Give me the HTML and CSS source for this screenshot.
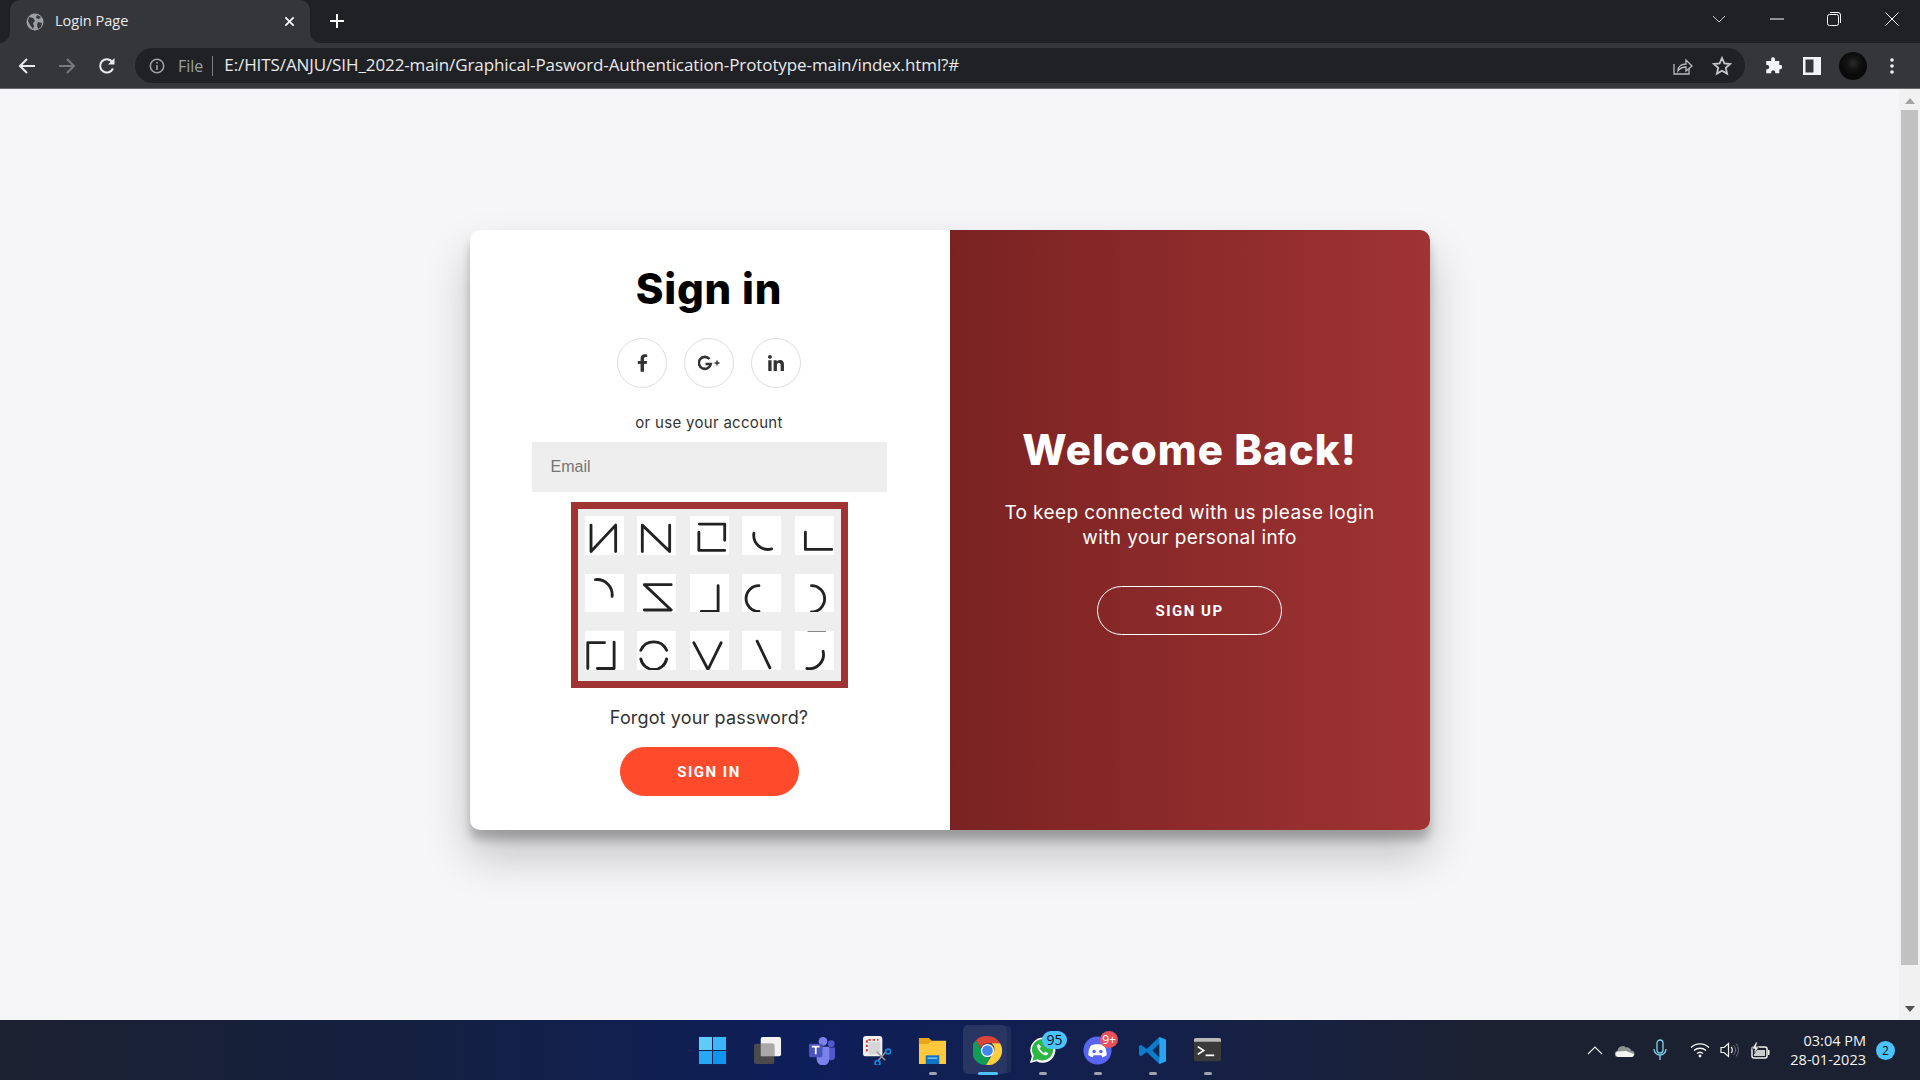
FILE: index.html

```html
<!DOCTYPE html>
<html lang="en">
<head>
  <meta charset="UTF-8" />
  <meta name="viewport" content="width=device-width, initial-scale=1.0" />
  <title>Login Page</title>
  <link rel="stylesheet" href="styles.css">
</head>
<body>
  <header class="browser">
    <div class="tabstrip">
      <div class="tab">
        <svg class="favicon" viewBox="0 0 18 18"><circle cx="9" cy="9" r="8.500" fill="#9aa0a6"/><path d="M3 4l4 1 2 3-2 2 1 3-1 3-3-4-2-4zM11 2l4 2-2 2-3-1zM12 9l4 1-1 4-3 2-1-4z" fill="#35363a"/></svg>
        <span class="tab-title">Login Page</span>
        <svg class="tab-close" viewBox="0 0 12 12"><path d="M1.500 1.500l9 9M10.500 1.500l-9 9" stroke="#fff" stroke-width="1.800"/></svg>
      </div>
      <svg class="new-tab" viewBox="0 0 14 14"><path d="M7 0v14M0 7h14" stroke="#fff" stroke-width="2"/></svg>
      <div class="window-btns">
        <svg width="14" height="8" viewBox="0 0 14 8"><path d="M1 1l6 6 6-6" fill="none" stroke="#c8c8c8"/></svg>
        <svg class="wb-min" width="14" height="2" viewBox="0 0 14 2"><path d="M0 1h14" stroke="#fff"/></svg>
        <svg class="wb-max" width="14" height="14" viewBox="0 0 14 14"><rect x=".5" y="2.500" width="11" height="11" rx="2" fill="none" stroke="#fff"/><path d="M3 .5h8a2.500 2.500 0 0 1 2.500 2.500v8" fill="none" stroke="#fff"/></svg>
        <svg class="wb-close" width="14" height="14" viewBox="0 0 14 14"><path d="M.5.5l13 13M13.500.5l-13 13" stroke="#fff"/></svg>
      </div>
    </div>
    <div class="toolbar">
      <svg class="tool" viewBox="0 0 18 18"><path d="M17 9H2.500M9 2L2 9l7 7" fill="none" stroke="#e8eaed" stroke-width="2"/></svg>
      <svg class="tool" viewBox="0 0 18 18"><path d="M1 9h14.500M9 2l7 7-7 7" fill="none" stroke="#77797c" stroke-width="2"/></svg>
      <svg class="tool" viewBox="0 0 18 18"><path d="M15 11.500A6.700 6.700 0 1 1 14.200 4.800" fill="none" stroke="#e8eaed" stroke-width="2"/><path d="M16.500 1v6.500H10z" fill="#e8eaed"/></svg>
      <div class="omnibox">
        <svg class="info" viewBox="0 0 16 16"><circle cx="8" cy="8" r="6.700" fill="none" stroke="#9aa0a6" stroke-width="1.600"/><path d="M7.200 7h1.600v5H7.200zM7.200 4h1.600v1.600H7.200z" fill="#9aa0a6"/></svg>
        <span class="scheme">File</span>
        <span class="url">E:/HITS/ANJU/SIH_2022-main/Graphical-Pasword-Authentication-Prototype-main/index.html?#</span>
        <svg class="omni-icon" viewBox="0 0 20 20"><path d="M1 8v10h15v-5" fill="none" stroke="#b8babc" stroke-width="1.300"/><path d="M5 15c0-5 4-7 8-7V4l6 6-6 5v-4c-3 0-6 1-8 4z" fill="none" stroke="#b8babc" stroke-width="1.300"/></svg>
        <svg class="omni-icon" viewBox="0 0 20 20"><path d="M10 2l2.400 5.400 5.800.6-4.400 3.900 1.300 5.700L10 14.700l-5.100 2.900 1.300-5.700L1.800 8l5.800-.6z" fill="none" stroke="#c4c6c8" stroke-width="1.800"/></svg>
      </div>
      <svg class="ext" viewBox="0 0 20 20"><path d="M8 1.500a2.300 2.300 0 0 1 4.300 1V4.500H17v4.300h1.500a2.400 2.400 0 0 1 0 4.700H17V18h-4.500v-1.500a2.300 2.300 0 0 0-4.500 0V18H2.500v-4.500H4a2.300 2.300 0 0 0 0-4.500H2.500V4.500H8z" fill="#f1f3f4"/></svg>
      <svg class="ext ext-panel" viewBox="0 0 18 18"><path d="M0 0h18v18H0z" fill="#f1f3f4"/><path d="M2.500 2.500h8v13h-8z" fill="#35363a"/></svg>
      <span class="avatar"></span>
      <svg class="kebab" viewBox="0 0 4 16"><circle cx="2" cy="2" r="1.800" fill="#f1f3f4"/><circle cx="2" cy="8" r="1.800" fill="#f1f3f4"/><circle cx="2" cy="14" r="1.800" fill="#f1f3f4"/></svg>
    </div>
  </header>

  <div class="viewport">
    <main class="page">
      <div class="card">
        <form class="signin" onsubmit="return false">
          <h1 class="signin-title">Sign in</h1>
          <div class="socials">
            <a class="social" href="#"><svg class="ico-f" viewBox="0 0 320 512"><path d="M279 288l14-93h-89v-60c0-25 12-50 52-50h41V6s-37-6-72-6c-73 0-121 44-121 125v70H23v93h81v224h100V288z"/></svg></a>
            <a class="social" href="#"><svg class="ico-g" viewBox="0 0 22 16"><path class="g-main" d="M11.500 4A6 6 0 1 0 12.800 9H7.500"/><path class="g-plus" d="M16.500 8h5M19 5.500v5"/></svg></a>
            <a class="social" href="#"><svg class="ico-in" viewBox="0 0 448 448"><path d="M100 448H7V149h93zM54 108C24 108 0 83 0 54a54 54 0 0 1 108 0c0 29-24 54-54 54zM447 448h-93V302c0-35-1-79-48-79-48 0-56 38-56 77v148h-93V149h89v41h1c12-24 43-48 88-48 94 0 112 62 112 142z"/></svg></a>
          </div>
          <span class="hint">or use your account</span>
          <input class="email" type="email" placeholder="Email" />
          <div class="pattern">
            <div class="tile"><svg viewBox="0 0 38 38"><path d="M5.700 9V35L30 9V35"/></svg></div>
            <div class="tile"><svg viewBox="0 0 38 38"><path d="M5 35V9L32 35V9"/></svg></div>
            <div class="tile"><svg viewBox="0 0 38 38"><path d="M9 8H34V24M8.500 16V34H34"/></svg></div>
            <div class="tile"><svg viewBox="0 0 38 38"><path d="M11.500 17A14 14 0 0 0 29 32.500"/></svg></div>
            <div class="tile"><svg viewBox="0 0 38 38"><path d="M10 16V33H36"/></svg></div>
            <div class="tile"><svg viewBox="0 0 38 38"><path d="M10 5.500A15 15 0 0 1 26.500 22"/></svg></div>
            <div class="tile"><svg viewBox="0 0 38 38"><path d="M33.500 10.500H7L33.500 35.500H7"/></svg></div>
            <div class="tile"><svg viewBox="0 0 38 38"><path d="M27.500 11.500V37H11"/></svg></div>
            <div class="tile"><svg viewBox="0 0 38 38"><path d="M16.500 11.500A12.750 12.750 0 0 0 16.500 37"/></svg></div>
            <div class="tile"><svg viewBox="0 0 38 38"><path d="M16 11.500A13 13 0 0 1 16 37.500"/></svg></div>
            <div class="tile"><svg viewBox="0 0 38 38"><path d="M2.500 37V11.500H19M28.500 11V37H12"/></svg></div>
            <div class="tile"><svg viewBox="0 0 38 38"><path d="M3.500 19A14 14 0 0 1 29 19M3.500 27.500A13 13 0 0 0 29 27.500"/></svg></div>
            <div class="tile"><svg viewBox="0 0 38 38"><path d="M3.500 11.500L17.500 38L30.500 11.500"/></svg></div>
            <div class="tile"><svg viewBox="0 0 38 38"><path d="M14.700 10L27.300 36.300"/></svg></div>
            <div class="tile"><svg viewBox="0 0 38 38"><path d="M27.500 20A14 14 0 0 1 11.500 37"/><path class="thin" d="M12.500 .5H30"/></svg></div>
          </div>
          <a class="forgot" href="#">Forgot your password?</a>
          <button class="btn btn-fill">SIGN IN</button>
        </form>
        <section class="welcome">
          <h1 class="welcome-title">Welcome Back!</h1>
          <p class="welcome-text">To keep connected with us please login with your personal info</p>
          <button class="btn btn-ghost">SIGN UP</button>
        </section>
      </div>
    </main>
    <div class="scrollbar">
      <svg class="arrow arrow-up" viewBox="0 0 10 6"><path d="M0 6l5-6 5 6z" fill="#a3a3a3"/></svg>
      <div class="thumb"></div>
      <svg class="arrow arrow-down" viewBox="0 0 10 6"><path d="M0 0l5 6 5-6z" fill="#505050"/></svg>
    </div>
  </div>

  <footer class="taskbar">
    <div class="apps">
      <div class="app"><svg viewBox="0 0 30 30"><path d="M1 1h13.500v13.500H1z" fill="#5fcdf8"/><path d="M15.500 1H29v13.500H15.500z" fill="#3cb6f5"/><path d="M1 15.500h13.500V29H1z" fill="#26a8f2"/><path d="M15.500 15.500H29V29H15.500z" fill="#0f95ee"/></svg></div>
      <div class="app"><svg viewBox="0 0 30 30"><rect x="8" y="1" width="21" height="20" rx="2" fill="#f2f2f2"/><rect x="1" y="8" width="21" height="21" rx="2" fill="#4a4a4a"/><rect x="8" y="8" width="14" height="13" fill="#a9a9a9"/></svg></div>
      <div class="app"><svg viewBox="0 0 30 30"><circle cx="24" cy="8" r="3.500" fill="#5059c9"/><path d="M20 12h8v9a4 4 0 0 1-8 0z" fill="#5059c9"/><circle cx="15.500" cy="5.500" r="4.500" fill="#7b83eb"/><path d="M9 11h13v13a6 6 0 0 1-13 0z" fill="#7b83eb"/><rect x="1" y="8" width="14" height="14" rx="1.500" fill="#4b53bc"/><path d="M4 11h8M8 11v8" stroke="#fff" stroke-width="1.800"/></svg></div>
      <div class="app"><svg viewBox="0 0 30 30"><rect x="0" y="0" width="20" height="21" rx="3" fill="#f0f0f0"/><path d="M4 16V4h12" fill="none" stroke="#e0392b" stroke-width="2" stroke-dasharray="2.500 2"/><path d="M6 6h12v13H6z" fill="#d6d6d6"/><path d="M14 16l9 9M24 16l-8 9" stroke="#9b9b9b" stroke-width="1.500"/><circle cx="26" cy="16" r="2.500" fill="none" stroke="#1883d7" stroke-width="1.800"/><circle cx="15" cy="28" r="2.500" fill="none" stroke="#1883d7" stroke-width="1.800"/></svg></div>
      <div class="app dot"><svg viewBox="0 0 30 30"><path d="M1 2h10l3 3h15v24H1z" fill="#ffc83d"/><path d="M1 2h10l3 3H1z" fill="#e8a317"/><path d="M1 5h13l-3 3H1z" fill="#e8a317"/><path d="M8 20h14v9H8z" fill="#1173c5"/><path d="M10 23h10" stroke="#7cc6f4" stroke-width="1.500"/></svg></div>
      <div class="app active"><svg viewBox="0 0 30 30"><path d="M15 0a15 15 0 0 1 13 7.500H15a7.500 7.500 0 0 0-7 5L3 4.500A15 15 0 0 1 15 0z" fill="#db4437"/><path d="M3 4.500l6.500 11.200A7.500 7.500 0 0 0 17.500 22l-4 8A15 15 0 0 1 3 4.500z" fill="#0f9d58"/><path d="M28 7.500A15 15 0 0 1 13.500 30l6.500-11a7.500 7.500 0 0 0-1-11.500z" fill="#ffcd40"/><circle cx="15" cy="15" r="6.800" fill="#fff"/><circle cx="15" cy="15" r="5.500" fill="#4285f4"/></svg></div>
      <div class="app dot"><svg viewBox="0 0 30 30"><path d="M2 28l2-7A13 13 0 1 1 9 26z" fill="#fff"/><path d="M4.500 25.500L6 20.500A11 11 0 1 1 10 24z" fill="#2bb741"/><path d="M11 8c-3 2-1 6 2 9s7 4 8 1l-3-2-1.500 1.500c-2-1-3.500-2.500-4.500-4.500L13.500 11z" fill="#fff"/></svg><span class="badge badge-blue">95</span></div>
      <div class="app dot"><svg viewBox="0 0 30 30"><circle cx="15" cy="15" r="14.500" fill="#5865f2"/><path d="M8 10c4-2 10-2 14 0 2 3 2.500 7 2.500 10-1.500 1-3 1.500-4.500 2l-1-2h-8l-1 2c-1.500-.5-3-1-4.500-2 0-3 .5-7 2.500-10z" fill="#fff"/><circle cx="11.500" cy="16" r="1.800" fill="#5865f2"/><circle cx="18.500" cy="16" r="1.800" fill="#5865f2"/></svg><span class="badge badge-red">9+</span></div>
      <div class="app dot"><svg viewBox="0 0 30 30"><path d="M22 1l7 3v22l-7 3L9 16.500 3 21l-2-1.500V10.500L3 9l6 4.500z" fill="#0a7cc9"/><path d="M22 1l7 3v22l-7 3z" fill="#2aa4ee"/><path d="M22 8l-7 7 7 7z" fill="#122a55"/></svg></div>
      <div class="app dot"><svg viewBox="0 0 30 30"><rect x="1" y="2" width="28" height="24" rx="2" fill="#3a3a3a"/><path d="M1 4a2 2 0 0 1 2-2h24a2 2 0 0 1 2 2v2H1z" fill="#b9b9b9"/><path d="M5 11l6 4-6 4" fill="none" stroke="#fff" stroke-width="1.800"/><path d="M13 20h9" stroke="#fff" stroke-width="1.800"/></svg></div>
    </div>
    <div class="tray">
      <svg class="tray-icon" viewBox="0 0 16 10"><path d="M1 9l7-7 7 7" fill="none" stroke="#e8e8e8" stroke-width="1.200"/></svg>
      <svg class="tray-cloud" viewBox="0 0 20 13"><path d="M3 13a3 3 0 0 1-.5-6A5 5 0 0 1 11 3.500a4 4 0 0 1 5 3 3.300 3.300 0 0 1 1 6.500z" fill="#8c8f94"/><path d="M3 13a3 3 0 0 1-1-5.500l9-.5 8 3a3 3 0 0 1-2 3z" fill="#f3f3f3"/></svg>
      <svg class="tray-mic" viewBox="0 0 16 22"><rect x="5" y="1" width="6" height="13" rx="3" fill="none" stroke="#7fd0ea" stroke-width="1.300"/><path d="M2 10a6 6 0 0 0 12 0M8 16v5" fill="none" stroke="#7fd0ea" stroke-width="1.300"/></svg>
      <svg class="tray-wifi" viewBox="0 0 20 16"><path d="M1 5.500a13 13 0 0 1 18 0M4 8.500a9 9 0 0 1 12 0M7 11.500a4.500 4.500 0 0 1 6 0" fill="none" stroke="#f3f3f3" stroke-width="1.400"/><circle cx="10" cy="14" r="1.400" fill="#f3f3f3"/></svg>
      <svg class="tray-sound" viewBox="0 0 20 16"><path d="M1 5.500h3L8.500 1.500v13L4 10.500H1z" fill="none" stroke="#f3f3f3" stroke-width="1.200"/><path d="M11 5a4 4 0 0 1 0 6" fill="none" stroke="#f3f3f3" stroke-width="1.200"/><path d="M13.500 3a7 7 0 0 1 0 10M16 1.500a10 10 0 0 1 0 13" fill="none" stroke="#6c6f74" stroke-width="1"/></svg>
      <svg class="tray-batt" viewBox="0 0 20 17"><rect x="2" y="5" width="15" height="11" rx="2" fill="#1b1f2a" stroke="#f3f3f3" stroke-width="1.500"/><path d="M4 8h11v6H4z" fill="#c9cacc"/><path d="M18 8v5h1.500V8z" fill="#f3f3f3"/><path d="M6 0L2 7h3l-1 5 5-7H6l1.500-5z" fill="#f3f3f3" stroke="#1b1f2a" stroke-width=".6"/></svg>
      <div class="clock"><span>03:04 PM</span><span>28-01-2023</span></div>
      <span class="notif">2</span>
    </div>
  </footer>
</body>
</html>
```

FILE: styles.css

```css
html, body { margin: 0; padding: 0; height: 100%; overflow: hidden; }
body { width: 1920px; height: 1080px; display: flex; flex-direction: column; background: #f6f5f7; font-family: "Open Sans", sans-serif; }

/* browser window */
.browser { flex: none; background: #35363a; height: 89px; box-shadow: inset 0 -1px 0 #6a6b6e; }
.tabstrip { height: 43px; background: #202124; display: flex; align-items: flex-start; }
.tab { width: 300px; height: 43px; margin-left: 10px; background: #35363a; border-radius: 10px 10px 0 0; display: flex; align-items: center; padding: 0 15px 0 16px; box-sizing: border-box; position: relative; }
.tab::before, .tab::after { content: ""; position: absolute; bottom: 0; width: 10px; height: 10px; }
.tab::before { left: -10px; background: radial-gradient(circle at 0 0, #202124 9.5px, #35363a 10px); }
.tab::after { right: -10px; background: radial-gradient(circle at 100% 0, #202124 9.5px, #35363a 10px); }
.favicon { width: 18px; height: 18px; margin-right: 11px; }
.tab-title { flex: 1; color: #e8eaed; font-size: 14.5px; padding-bottom: 2px; }
.tab-close { width: 11px; height: 11px; }
.new-tab { width: 14px; height: 14px; margin: 14px 0 0 20px; }
.window-btns { margin-left: auto; display: flex; align-items: center; height: 38px; padding-right: 21px; }
.wb-min { margin-left: 44px; }
.wb-max { margin-left: 43px; }
.wb-close { margin-left: 44px; }

.toolbar { height: 45px; display: flex; align-items: center; padding-left: 18px; box-sizing: border-box; }
.tool { width: 18px; height: 18px; margin-right: 22px; }
.omnibox { width: 1610px; margin-left: -3px; height: 35px; border-radius: 18px; background: #202124; display: flex; align-items: center; box-sizing: border-box; padding: 0 13px 0 14px; }
.info { width: 16px; height: 16px; margin-right: 13px; }
.scheme { color: #9aa0a6; font-size: 16px; padding-right: 9px; margin-right: 11px; border-right: 1px solid #7b7d80; line-height: 20px; }
.url { flex: 1; color: #e8eaed; font-size: 17px; letter-spacing: -0.1px; white-space: nowrap; padding-bottom: 2px; }
.omni-icon { width: 20px; height: 20px; margin-left: 19px; }
.ext { width: 18px; height: 18px; margin-left: 19px; }
.ext-panel { margin-left: 21px; }
.avatar { width: 28px; height: 28px; border-radius: 50%; background: radial-gradient(circle at 50% 40%, #2b2b2b 0, #141414 6px, #0a0a0a 12px); margin-left: 18px; }
.kebab { width: 4px; height: 16px; margin-left: 23px; }

/* page */
.viewport { flex: 1; display: flex; min-height: 0; }
.page { flex: 1; display: flex; justify-content: center; padding: 141px 0 0 1px; }
.scrollbar { width: 21px; background: #f1f1f1; display: flex; flex-direction: column; align-items: center; }
.arrow { width: 10px; height: 6px; flex: none; }
.arrow-up { margin-top: 9px; }
.arrow-down { margin-top: 41px; }
.thumb { width: 17px; height: 855px; flex: none; background: #c1c1c1; margin-top: 6px; }

.card { width: 960px; height: 600px; display: flex; background: #fff; border-radius: 10px; overflow: hidden; box-shadow: 0 25px 45px rgba(0,0,0,0.22), 0 10px 10px rgba(0,0,0,0.22); }
.signin { width: 480px; box-sizing: border-box; padding-right: 2px; display: flex; flex-direction: column; align-items: center; font-family: "Inter", sans-serif; }
.signin-title { margin: 26px 0 0; font-size: 42px; line-height: 66px; font-weight: 800; letter-spacing: 0.8px; color: #000; }
.socials { display: flex; gap: 17px; margin-top: 16px; }
.social { width: 48px; height: 48px; border: 1px solid #ddd; border-radius: 50%; display: flex; align-items: center; justify-content: center; }
.social svg { fill: #333; }
.ico-f { width: 11px; height: 18px; }
.ico-g { width: 22px; height: 16px; fill: none !important; }
.g-main { fill: none; stroke: #333; stroke-width: 2.6; }
.g-plus { fill: none; stroke: #333; stroke-width: 1.4; }
.ico-in { width: 16px; height: 16px; }
.hint { margin-top: 26px; font-size: 15px; line-height: 18px; letter-spacing: 0.3px; color: #333; }
.email { width: 355px; height: 50px; margin-top: 10px; box-sizing: border-box; border: 0; background: #eee; padding: 0 19px; font-size: 16px; font-family: "Liberation Sans", sans-serif; outline: 0; }
.email::placeholder { color: #757575; opacity: 1; }
.pattern { width: 277px; margin-top: 10px; box-sizing: border-box; border: 7px solid #a03333; background: #eee; padding: 7px 7px 11.5px; display: grid; grid-template-columns: repeat(5, 39px); justify-content: space-between; grid-auto-rows: 38.5px; row-gap: 19px; }
.tile { background: #fff; }
.tile svg { display: block; width: 100%; height: 100%; fill: none; stroke: #222; stroke-width: 2.8; stroke-linecap: round; stroke-linejoin: round; filter: blur(0.3px); }
.tile .thin { stroke-width: 1; stroke: #888; }
.forgot { margin-top: 19px; color: #333; font-size: 18px; line-height: 22px; letter-spacing: 0.15px; text-decoration: none; }
.btn { border-radius: 25px; font-family: "Roboto", sans-serif; font-size: 15px; font-weight: 700; letter-spacing: 1.5px; padding: 0; cursor: pointer; }
.btn-fill { width: 179px; height: 49px; margin-top: 18px; background: #ff4b2b; border: 1px solid #ff4b2b; color: #fff; }
.welcome { width: 480px; box-sizing: border-box; padding-right: 1px; display: flex; flex-direction: column; align-items: center; background: linear-gradient(to right, #7a2222, #a03333); color: #fff; font-family: "Inter", sans-serif; }
.welcome-title { margin: 192px 0 0; font-size: 42px; line-height: 56px; font-weight: 800; letter-spacing: 1px; }
.welcome-text { width: 400px; margin: 22px 0 0; text-align: center; font-size: 19px; line-height: 25px; letter-spacing: 0.4px; }
.btn-ghost { width: 185px; height: 49px; margin-top: 36px; background: transparent; border: 1px solid #fff; color: #fff; }

/* taskbar */
.taskbar { flex: none; height: 60px; position: relative; background: linear-gradient(to right, #1b2130 0%, #15203f 20%, #0d1f5a 42%, #14204a 60%, #1b2130 78%); display: flex; align-items: center; justify-content: flex-end; }
.apps { position: absolute; left: 685px; top: 0; height: 60px; display: flex; }
.app { width: 55px; height: 60px; position: relative; display: flex; align-items: center; justify-content: center; }
.app > svg { width: 29px; height: 29px; position: relative; }
.app.active::before { content: ""; position: absolute; left: 3px; top: 5px; width: 44px; height: 49px; border-radius: 5px; background: rgba(255,255,255,0.1); box-shadow: 5px 0 0 -1px rgba(255,255,255,0.06); }
.app.active::after { content: ""; position: absolute; bottom: 5px; left: 18px; width: 20px; height: 3px; border-radius: 2px; background: #4cc2ff; }
.app.dot::after { content: ""; position: absolute; bottom: 5px; left: 24px; width: 8px; height: 3px; border-radius: 2px; background: #9ea3ad; }
.badge { position: absolute; text-align: center; }
.badge-blue { top: 11px; left: 27px; width: 25px; height: 18px; border-radius: 9px; background: #4cc2ff; color: #111; font-size: 14px; line-height: 18px; }
.badge-red { top: 11px; left: 30px; width: 18px; height: 17px; border-radius: 50%; background: #e8505b; color: #fff; font-size: 12px; line-height: 17px; }

.tray { display: flex; align-items: center; padding-right: 25px; color: #f3f3f3; }
.tray-icon { width: 16px; height: 10px; }
.tray-cloud { width: 20px; height: 13px; margin-left: 12px; }
.tray-mic { width: 16px; height: 22px; margin-left: 17px; }
.tray-wifi { width: 20px; height: 16px; margin-left: 22px; }
.tray-sound { width: 20px; height: 16px; margin-left: 10px; }
.tray-batt { width: 20px; height: 17px; margin-left: 10px; }
.clock { display: flex; flex-direction: column; align-items: flex-end; margin-left: 20px; font-size: 14.5px; line-height: 19px; }
.notif { width: 19px; height: 19px; margin-left: 10px; border-radius: 50%; background: #4cc2ff; color: #111; font-size: 12px; line-height: 19px; text-align: center; }
```
